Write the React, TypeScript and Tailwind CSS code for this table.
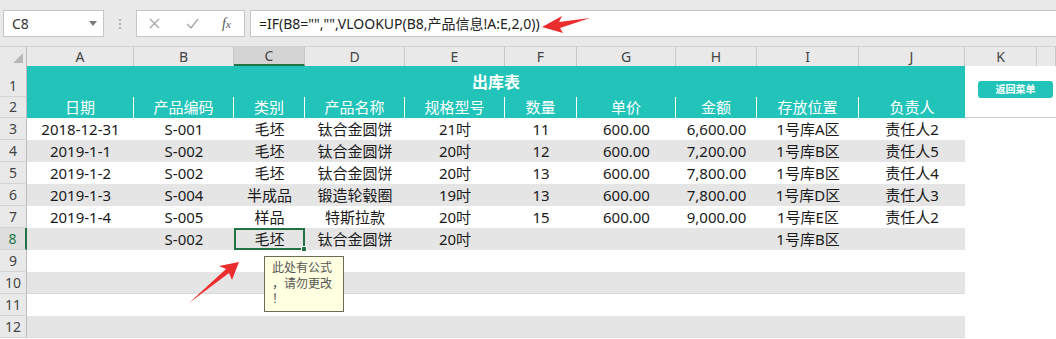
import React from "react";

const COLS = [
  { k: "A", w: 107 },
  { k: "B", w: 100 },
  { k: "C", w: 71 },
  { k: "D", w: 100 },
  { k: "E", w: 100 },
  { k: "F", w: 72 },
  { k: "G", w: 99 },
  { k: "H", w: 81 },
  { k: "I", w: 102 },
  { k: "J", w: 106 },
  { k: "K", w: 72 },
  { k: "", w: 19 },
];

const HEAD = ["日期", "产品编码", "类别", "产品名称", "规格型号", "数量", "单价", "金额", "存放位置", "负责人"];

const DATA: string[][] = [
  ["2018-12-31", "S-001", "毛坯", "钛合金圆饼", "21吋", "11", "600.00", "6,600.00", "1号库A区", "责任人2"],
  ["2019-1-1", "S-002", "毛坯", "钛合金圆饼", "20吋", "12", "600.00", "7,200.00", "1号库B区", "责任人5"],
  ["2019-1-2", "S-002", "毛坯", "钛合金圆饼", "20吋", "13", "600.00", "7,800.00", "1号库B区", "责任人4"],
  ["2019-1-3", "S-004", "半成品", "锻造轮毂圈", "19吋", "13", "600.00", "7,800.00", "1号库D区", "责任人3"],
  ["2019-1-4", "S-005", "样品", "特斯拉款", "20吋", "15", "600.00", "9,000.00", "1号库E区", "责任人2"],
  ["", "S-002", "毛坯", "钛合金圆饼", "20吋", "", "", "", "1号库B区", ""],
];

const FONT = { fontFamily: '"Noto Sans", "Noto Sans CJK SC", sans-serif' };

function RowNum({ n, h, active }: { n: number; h: string; active?: boolean }) {
  return (
    <div
      className={`w-[27px] shrink-0 ${h} flex items-end justify-center pb-[1px] border-b border-[#d4d4d4] ${
        active ? "bg-[#dedede] text-[#217346] border-r-2 border-r-[#217346]" : "bg-[#e9e9e9] text-[#444] border-r border-r-[#bdbdbd]"
      } text-[14px] leading-[18px]`}
    >
      {n}
    </div>
  );
}

export default function App() {
  return (
    <div className="w-[1056px] h-[339px] overflow-hidden bg-white relative text-[#1a1a1a]" style={FONT}>
      {/* formula bar */}
      <div className="h-[47px] bg-[#e9e9e9] flex items-start pt-[10px] border-b border-[#d0d0d0]">
        <div className="ml-[3px] w-[101px] h-[27px] bg-white border border-[#c6c6c6] flex items-center justify-between pl-[8px] pr-[6px]">
          <span className="text-[14px] text-[#333]">C8</span>
          <svg width="8" height="5" viewBox="0 0 8 5">
            <polygon points="0,0 8,0 4,5" fill="#7a7a7a" />
          </svg>
        </div>
        <div className="w-[32px] h-[27px] flex flex-col items-center justify-center gap-[2px]">
          <span className="w-[2px] h-[2px] bg-[#b5b5b5]" />
          <span className="w-[2px] h-[2px] bg-[#b5b5b5]" />
          <span className="w-[2px] h-[2px] bg-[#b5b5b5]" />
        </div>
        <div className="w-[109px] h-[27px] bg-white border border-[#c6c6c6] flex items-center">
          <svg className="ml-[12px]" width="11" height="11" viewBox="0 0 11 11">
            <path d="M1 1 L10 10 M10 1 L1 10" stroke="#a8a8a8" strokeWidth="1.4" />
          </svg>
          <svg className="ml-[26px]" width="13" height="11" viewBox="0 0 13 11">
            <path d="M1 6 L5 10 L12 1" stroke="#a8a8a8" strokeWidth="1.4" fill="none" />
          </svg>
          <span
            className="ml-[23px] text-[14px] italic text-[#555]"
            style={{ fontFamily: '"Liberation Serif", serif' }}
          >
            f<span className="text-[11px]">x</span>
          </span>
        </div>
        <div className="ml-[5px] flex-1 h-[27px] bg-white border border-[#c6c6c6] border-r-0 flex items-center pl-[8px]">
          <span className="text-[14px] text-[#222]">=IF(B8="","",VLOOKUP(B8,产品信息!A:E,2,0))</span>
        </div>
      </div>

      {/* column headers */}
      <div className="flex h-[19px] bg-[#e9e9e9]">
        <div className="w-[27px] shrink-0 flex items-end justify-end pr-[3px] pb-[3px] border-r border-[#bdbdbd]">
          <svg width="10" height="10" viewBox="0 0 10 10">
            <polygon points="10,0 10,10 0,10" fill="#b8b8b8" />
          </svg>
        </div>
        {COLS.map((c, i) => (
          <div
            key={i}
            style={{ width: c.w }}
            className={`shrink-0 flex items-center justify-center text-[14px] leading-none border-r border-[#c8c8c8] ${
              c.k === "C" ? "bg-[#d4d4d4] text-[#444] border-b-2 border-b-[#217346]" : "text-[#444]"
            }`}
          >
            {c.k}
          </div>
        ))}
      </div>

      {/* row 1 */}
      <div className="flex h-[31px]">
        <RowNum n={1} h="h-[31px]" />
        <div className="w-[938px] shrink-0 bg-[#22c4b9] flex items-center justify-center text-white font-bold text-[16px]">
          出库表
        </div>
        <div className="flex-1" />
      </div>

      {/* row 2 */}
      <div className="flex h-[21px]">
        <RowNum n={2} h="h-[21px]" />
        {HEAD.map((t, i) => (
          <div
            key={t}
            style={{ width: COLS[i].w }}
            className={`shrink-0 bg-[#22c4b9] text-white text-[15px] flex items-center justify-center ${
              i < 9 ? "border-r border-white" : ""
            }`}
          >
            {t}
          </div>
        ))}
        <div className="flex-1 border-b border-[#cfcfcf]" />
      </div>

      {/* data rows 3..8 */}
      {DATA.map((r, ri) => {
        const grey = ri % 2 === 1;
        return (
          <div key={ri} className="flex h-[22px]">
            <RowNum n={ri + 3} h="h-[22px]" active={ri === 5} />
            {r.map((v, ci) => (
              <div
                key={ci}
                style={{ width: COLS[ci].w }}
                className={`shrink-0 flex items-center justify-center text-[15px] whitespace-nowrap ${
                  grey ? "bg-[#e5e5e5]" : ""
                } ${ri === 5 && ci === 2 ? "relative border-2 border-[#217346]" : ""}`}
              >
                {v}
                {ri === 5 && ci === 2 && (
                  <span className="absolute -right-[4px] -bottom-[4px] w-[6px] h-[6px] bg-[#217346] border border-white" />
                )}
              </div>
            ))}
            <div className="flex-1" />
          </div>
        );
      })}

      {/* empty rows 9..12 */}
      {[9, 10, 11, 12].map((n) => (
        <div key={n} className="flex h-[22px]">
          <RowNum n={n} h="h-[22px]" />
          <div className={`w-[938px] shrink-0 ${n % 2 === 0 ? "bg-[#e5e5e5] border-b border-[#dadada]" : ""}`} />
          <div className="flex-1" />
        </div>
      ))}

      {/* floating button */}
      <div className="absolute left-[978px] top-[81px] w-[75px] h-[17px] rounded-[3px] bg-[#22c4b9] flex items-center justify-center text-white text-[10px] font-bold">
        返回菜单
      </div>

      {/* comment */}
      <div className="absolute left-[264px] top-[256px] w-[80px] h-[56px] bg-[#ffffe1] border border-[#6b6b5a] pl-[7px] pt-[3px] text-[12px] leading-[15.5px] text-[#555]">
        <div>此处有公式</div>
        <div>，请勿更改</div>
        <div>！</div>
      </div>

      {/* arrows */}
      <svg className="absolute left-0 top-0 pointer-events-none" width="1056" height="339">
        <polygon points="542,27 562,16 559,22 590,18 560,28 563,33" fill="#ec2d2d" />
        <polygon points="239,262 232,280 229,273 189,303 226,269 219,266" fill="#ec2d2d" />
      </svg>
    </div>
  );
}
